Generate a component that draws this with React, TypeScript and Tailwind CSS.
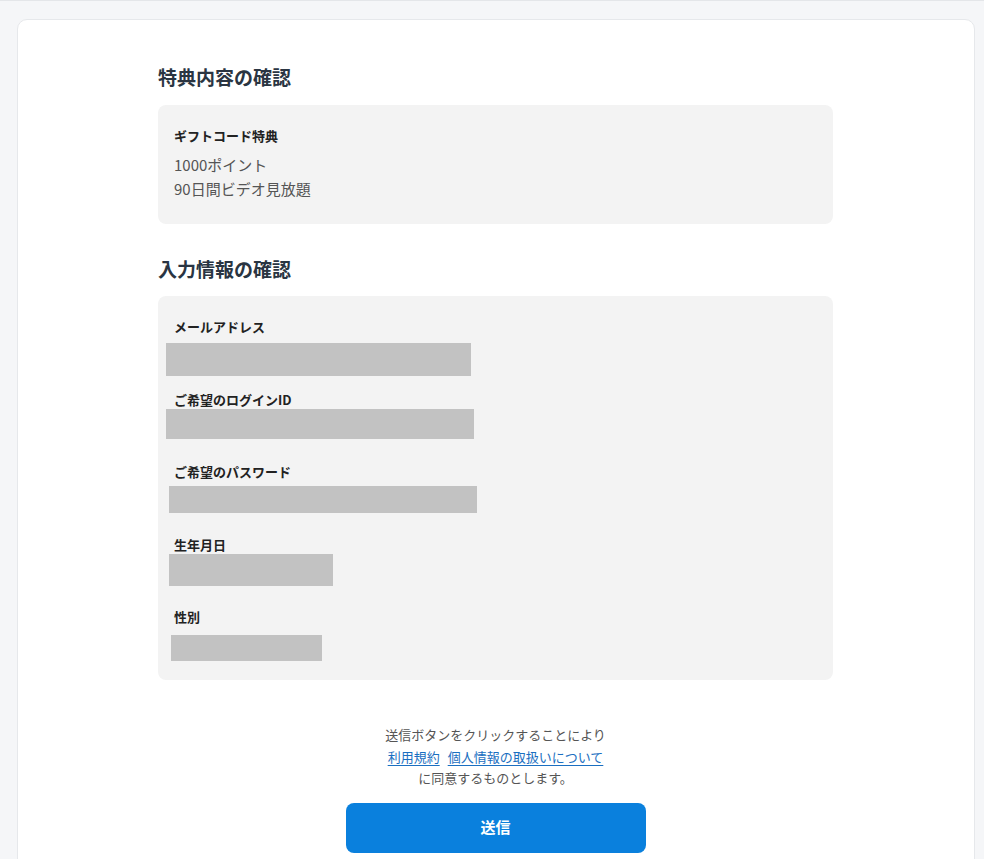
const FONT = { fontFamily: '"Noto Sans CJK JP", "Noto Sans", sans-serif' };

type Field = {
    label: string;
    labelTop: string;
    barTop: string;
    barLeft: string;
    barW: string;
    barH: string;
};

const fields: Field[] = [
    { label: 'メールアドレス', labelTop: 'mt-0', barTop: 'mt-[6px]', barLeft: 'ml-[-8px]', barW: 'w-[305px]', barH: 'h-[33px]' },
    { label: 'ご希望のログインID', labelTop: 'mt-[14px]', barTop: 'mt-[-1px]', barLeft: 'ml-[-8px]', barW: 'w-[308px]', barH: 'h-[30px]' },
    { label: 'ご希望のパスワード', labelTop: 'mt-[23px]', barTop: 'mt-[4px]', barLeft: 'ml-[-5px]', barW: 'w-[308px]', barH: 'h-[27px]' },
    { label: '生年月日', labelTop: 'mt-[22px]', barTop: 'mt-[-1px]', barLeft: 'ml-[-5px]', barW: 'w-[164px]', barH: 'h-[32px]' },
    { label: '性別', labelTop: 'mt-[21px]', barTop: 'mt-[8px]', barLeft: 'ml-[-3px]', barW: 'w-[151px]', barH: 'h-[26px]' },
];

const App = () => {
    return (
        <div style={FONT} className="min-h-screen bg-[#f5f6f8] border-t border-[#e4e6e9] pt-[18px] pl-[17px] pr-[9px]">
            <div className="bg-white border border-[#e6e8eb] rounded-[10px] pl-[140px] pr-[141px] pt-[43px] pb-[24px]">
                <h2 className="text-[19px] leading-[28px] font-bold text-[#2a3542]">特典内容の確認</h2>
                <div className="mt-[14px] bg-[#f3f3f3] rounded-[8px] px-4 pt-[21px] pb-[23px]">
                    <p className="text-[13px] leading-[20px] font-bold text-[#222]">ギフトコード特典</p>
                    <div className="mt-[7px] text-[15px] leading-[24px] text-[#555]">
                        <p>1000ポイント</p>
                        <p>90日間ビデオ見放題</p>
                    </div>
                </div>

                <h2 className="mt-[31px] text-[19px] leading-[28px] font-bold text-[#2a3542]">入力情報の確認</h2>
                <div className="mt-[13px] bg-[#f3f3f3] rounded-[8px] px-4 pt-[21px] pb-[19px]">
                    {fields.map((f) => (
                        <div key={f.label}>
                            <p className={`${f.labelTop} text-[13px] leading-[20px] font-bold text-[#222]`}>{f.label}</p>
                            <div className={`${f.barTop} ${f.barLeft} ${f.barW} ${f.barH} bg-[#c2c2c2]`} />
                        </div>
                    ))}
                </div>

                <div className="mt-[44px] text-center text-[13px] leading-[21.5px] text-[#555]">
                    <p>送信ボタンをクリックすることにより</p>
                    <p className="flex justify-center gap-[8px]">
                        <a href="#" className="text-[#1b6fc1] underline underline-offset-[3px]">利用規約</a>
                        <a href="#" className="text-[#1b6fc1] underline underline-offset-[3px]">個人情報の取扱いについて</a>
                    </p>
                    <p>に同意するものとします。</p>
                </div>

                <div className="mt-[14px] flex justify-center">
                    <button className="w-[300px] h-[50px] rounded-[8px] bg-[#0a80dd] text-white text-[15px] font-bold">
                        送信
                    </button>
                </div>
            </div>
        </div>
    );
};

export default App;
